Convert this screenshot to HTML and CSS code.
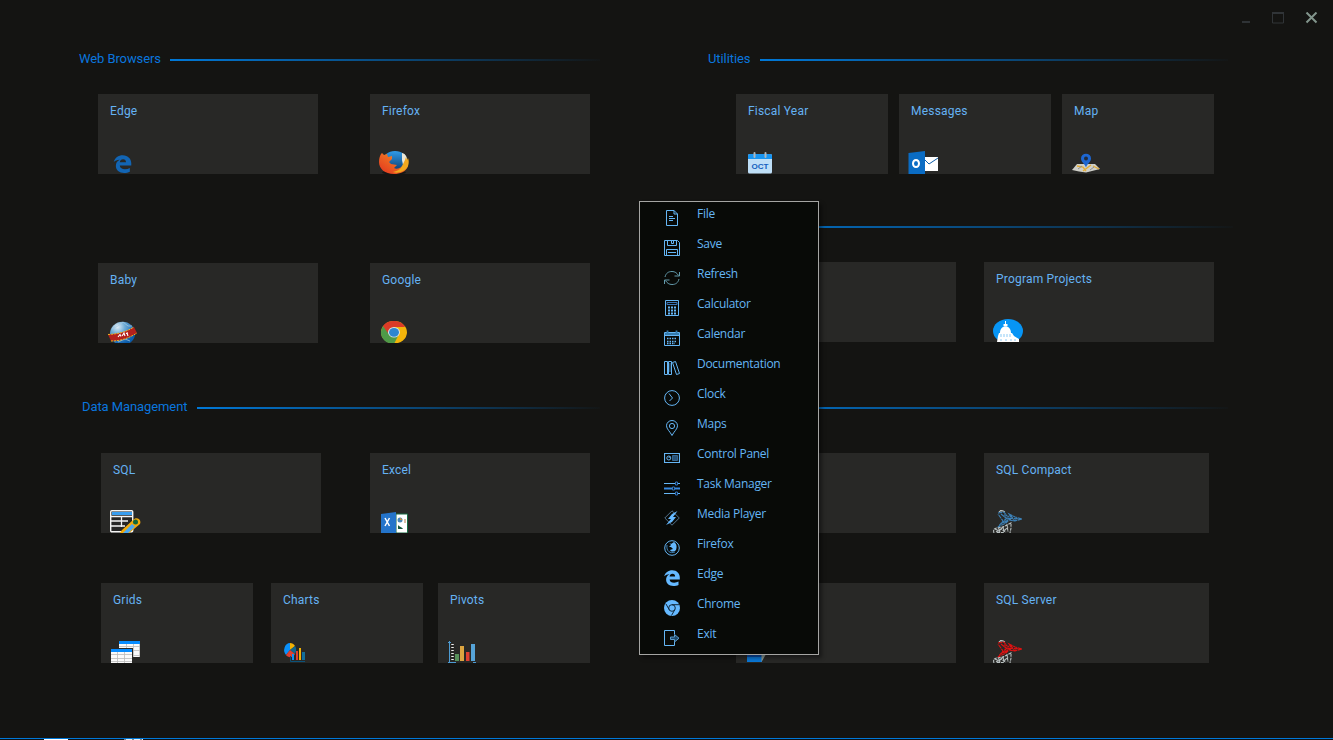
FILE: index.html
```html
<!DOCTYPE html>
<html lang="en">
<head>
<meta charset="utf-8">
<title>Launcher</title>
<link rel="stylesheet" href="styles.css">
</head>
<body>
<svg class="defs" width="0" height="0" aria-hidden="true">
  <defs>
    <linearGradient id="ffBlue" x1="0" y1="0" x2="0" y2="1"><stop offset="0" stop-color="#2f9be8"/><stop offset="1" stop-color="#0b3567"/></linearGradient>
    <linearGradient id="ffFire" x1="0" y1="1" x2="1" y2="0"><stop offset="0" stop-color="#e2321f"/><stop offset=".55" stop-color="#ee6a22"/><stop offset="1" stop-color="#f6c331"/></linearGradient>
    <radialGradient id="globe" cx=".3" cy=".22" r=".75"><stop offset="0" stop-color="#e2eef6"/><stop offset=".4" stop-color="#6caad4"/><stop offset="1" stop-color="#0a5cab"/></radialGradient>
    <symbol id="edge" viewBox="0 0 16 16"><path d="M.2 6.300C1.200 2.500 4.200 .2 8.300 .2c4.600 0 7.500 3.300 7.500 7.100v2.100H5.600c.1 2.300 2.100 3.300 4.600 3.300 1.600 0 3-.4 4.300-1.100v3.300c-1.400.8-3.200 1.100-5.100 1.100-4.400 0-7.300-2.500-7.300-6.200C2.100 7.300 3.100 5.400 5.500 4.200 3.500 4.100 1.600 4.900 .2 6.300zM5.600 6.400h5.500c0-1.700-.9-2.700-2.600-2.700S5.900 4.700 5.600 6.400z"/></symbol>
    <symbol id="bird" viewBox="0 0 32 28"><g fill="none" stroke-width="1.100"><path class="bird-light" stroke-dasharray="3 .8" d="M7 7c1-1 2-2 4-1l2 1M8 5.500l4 .5M2 28c-1-3 0-5 3-5l6-1 4-2 4-2v5l-1 5M3 24l4 2 4-4 1 4 4-4M6 22l2 5M11 21l1 6M15 19l1 8M4 27l5-3 5 3M5 27.500h7"/><path class="bird-wing" stroke-dasharray="4 .7" d="M6 8l6-1 3 4 4 1-2-3 6 3 7 2-7 2-6-1-3 3-8 4 5-6-5-7M9 9l5 4 14 1M13 9l0 9 4-5 2 2M9 19l6-6 5 3M19 10l3 6 3-3M10 18l5-2"/></g></symbol>
  </defs>
</svg>

<div class="window">
  <header class="titlebar">
    <svg class="winctl" viewBox="0 0 80 16"><path d="M2 9.500h8M2 10.500h8" stroke="#2f3336"/><path d="M32.500 .5h11v10.500h-11z" fill="none" stroke="#303437"/><path d="M32 1h12" stroke="#303437" stroke-width="2"/><path d="M66.500 .5l10 10m0-10l-10 10" stroke="#82958c" stroke-width="2"/></svg>
  </header>

  <main class="board">
    <div class="column column-left">
      <div class="heading"><h2>Web Browsers</h2><span class="rule"></span></div>
      <div class="row row-wide first">
        <article class="card w220"><h3>Edge</h3>
          <svg class="icon" viewBox="0 0 32 28"><use href="#edge" x="7" y="9" width="19" height="18" fill="#1265b4"/></svg></article>
        <article class="card w220"><h3>Firefox</h3>
          <svg class="icon" viewBox="0 0 32 28"><ellipse cx="16" cy="26.500" rx="12" ry="2" fill="#151515"/><ellipse cx="17" cy="15.500" rx="12.500" ry="10.500" fill="url(#ffBlue)"/><path d="M24 7c4 1 5 4 5 8l-4 4-1-5z" fill="#ece6d6"/><path d="M3 8l1-1 2 2 3-1 1 3 4-1 0 3-3 3 2 2 6 1-3 3c4 2 8-1 10-4l4 2c-2 6-8 8-14 8C7 28 1 23 1 16c0-4 1-6 2-8z" fill="url(#ffFire)"/><path d="M24 20l3-6 1-3 1 3 1-2c2 5 0 11-5 13-4 2-7 2-10 1 5-1 8-3 9-6z" fill="#f2a91f"/></svg></article>
      </div>
      <div class="row row-wide second">
        <article class="card w220"><h3>Baby</h3>
          <svg class="icon" viewBox="0 0 32 28"><ellipse cx="16.500" cy="18.500" rx="12.500" ry="11.800" fill="url(#globe)"/><path d="M6 14l6-3 5-4M17 7l5 4 4 0M12 27l7-3 5 2" fill="none" stroke="#a7cbe2" stroke-width=".7"/><path d="M2 19.500C12 19 20 17 28 12l3 6c-8 5-16 8-26 8z" fill="#b3201c"/><path d="M2 19.500C12 19 20 17 28 12M5 26c10 0 18-3 26-8" fill="none" stroke="#f0b01d" stroke-dasharray="2 1"/><path d="M12 22l2-2.500 1 2M16 21l2-3 1 3M20 18.500l2-.8M21 18l1 3" fill="none" stroke="#fff" stroke-width="1.100"/></svg></article>
        <article class="card w220"><h3>Google</h3>
          <svg class="icon" viewBox="0 0 32 28"><ellipse cx="16" cy="17.300" rx="13" ry="11.200" fill="#f3b40a"/><path d="M16 17.500L5 11c-3 5-3 11 2 15 3 2 6 3 9 3l4-8z" fill="#4f9a48"/><path d="M5 11c3-4 7-5 11-5 5 0 9 2 11 6H16l-6 6z" fill="#dc3b27"/><ellipse cx="16" cy="17.300" rx="6" ry="5.300" fill="#dce2e2"/><ellipse cx="16" cy="17.300" rx="5" ry="4.400" fill="#2e86d0"/></svg></article>
      </div>
      <div class="heading data"><h2>Data Management</h2><span class="rule"></span></div>
      <div class="row row-data third">
        <article class="card w220"><h3>SQL</h3>
          <svg class="icon" viewBox="0 0 32 28"><rect x="1.700" y="5.700" width="22" height="21" rx="1" fill="#252525" stroke="#f4f4f4" stroke-width="1.400"/><path d="M3 7h20v3H3z" fill="#379df0"/><path d="M2 11.500h22M2 16h17M2 21h14M12.500 11v11" stroke="#f4f4f4" stroke-width="1.300"/><path d="M10 29l3-4 11-10c3-4 9-1 7 4L19 29z" fill="#f1a90b"/><path d="M14 28l9-9 3 2.500L18 29z" fill="#4ba8f0"/><circle cx="26.500" cy="17" r="2.500" fill="#11683b"/></svg></article>
        <article class="card w220"><h3>Excel</h3>
          <svg class="icon" viewBox="0 0 32 28"><path d="M18 9h11.500v19H18z" fill="#fff" stroke="#176b42"/><path d="M3 9l15-2v21H3z" fill="#2474ca"/><path d="M7 13l4.500 8M11.500 13L7 21" stroke="#fff" stroke-width="1.500"/><circle cx="22" cy="15" r="2.500" fill="#4b88b5"/><path d="M22 15v-2.500l2.500 2.500z" fill="#c59243"/><path d="M27 14v4" stroke="#b97c4b"/><path d="M20 20c1 2 3 1 5 4h-5z" fill="#16573e"/></svg></article>
      </div>
      <div class="row row-small fourth">
        <article class="card w152"><h3>Grids</h3>
          <svg class="icon" viewBox="0 0 32 28"><path d="M10 6h21v16H10z" fill="#fafafa"/><path d="M10 6h21v3H10z" fill="#078cff"/><path d="M10 11.500h21M10 15.500h21M10 20.500h21M17.500 9v13M24.500 9v13M30.500 9v13" stroke="#bbb" stroke-width=".8"/><path d="M1 13h23v15H1z" fill="#282826"/><path d="M2 14h21v14H2z" fill="#fafafa"/><path d="M2 14h21v3H2z" fill="#078cff"/><path d="M2 19.500h21M2 23.500h21M2 26.500h21M8.500 17v11M15.500 17v11" stroke="#bbb" stroke-width=".8"/></svg></article>
        <article class="card w152 after-grids"><h3>Charts</h3>
          <svg class="icon" viewBox="0 0 32 28"><path d="M11 15V8a6 7 0 0 0-4 12z" fill="#0a91fb"/><path d="M11 15V8c2 0 4 1 5 3z" fill="#f2b104"/><path d="M11 15l5-4c2 3 1 6 0 8z" fill="#12668e"/><path d="M11 15l5 4c-2 4-7 4-9 1z" fill="#df3f31"/><path d="M13 19h2v6h-2z" fill="#0a91fb"/><path d="M17 16h2v9h-2z" fill="#df3f31"/><path d="M20 13h2v12h-2z" fill="#f2b104"/><path d="M23 17h3v8h-3z" fill="#126f9b"/><path d="M11.500 21v5.500H26" fill="none" stroke="#0b5279"/></svg></article>
        <article class="card w152 after-charts"><h3>Pivots</h3>
          <svg class="icon" viewBox="0 0 32 28"><path d="M3.500 6v22M2 7.500h3M2 27.500h8M27 27.500h3" stroke="#4d9bd2"/><path d="M6.500 9v18" stroke="#eee" stroke-width="2.500" stroke-dasharray="1 2"/><path d="M9 19h4v7H9z" fill="#57905a"/><path d="M14 11h4v15h-4z" fill="#dca540"/><path d="M20 17h3.500v9H20z" fill="#df3f31"/><path d="M25 9h4v17h-4z" fill="#56a4d8"/></svg></article>
      </div>
    </div>

    <div class="column column-right">
      <div class="heading"><h2>Utilities</h2><span class="rule"></span></div>
      <div class="row row-util first">
        <article class="card w152"><h3>Fiscal Year</h3>
          <svg class="icon" viewBox="0 0 32 28"><rect x="4" y="8" width="24" height="19.500" rx="1.500" fill="#bfdff7"/><path d="M4 13V9.500Q4 8 5.500 8h21Q28 8 28 9.500V13z" fill="#1795f2"/><path d="M10.500 7v4M21.500 7v4" stroke="#aeb7bc" stroke-width="2" stroke-linecap="round"/><text class="oct" x="16" y="23" text-anchor="middle" textLength="17" lengthAdjust="spacingAndGlyphs">OCT</text></svg></article>
        <article class="card w152"><h3>Messages</h3>
          <svg class="icon" viewBox="0 0 32 28"><path d="M17 11h14v14H17z" fill="#fff"/><path d="M17 13l5 5 9-6" fill="none" stroke="#0b5ca8"/><path d="M1.500 7l16.500-2v23H1.500z" fill="#0a6cc4"/><ellipse cx="9" cy="17.500" rx="3" ry="3.600" fill="none" stroke="#fff" stroke-width="2"/></svg></article>
        <article class="card w152"><h3>Map</h3>
          <svg class="icon" viewBox="0 0 32 28"><path d="M7 18l18 0 5 5-8 2-6 1.500-7-1-7-1.500z" fill="#cfcfc8"/><path d="M7 20l6 1 3 4M13 25l8-6M23 20l6 3" fill="none" stroke="#e3ac35" stroke-width="1.300"/><path d="M8 23l4-3M20 24l4-3" stroke="#8b8f91"/><path d="M16 21.500c-1-4-5-5-5-9a5 4.800 0 0 1 10 0C21 16.500 17 17.500 16 21.500z" fill="#1d66d1"/><circle cx="16" cy="12.500" r="2" fill="#222a38"/></svg></article>
      </div>
      <div class="heading projects"><span class="rule"></span></div>
      <div class="row row-pair projects-row">
        <article class="card w220"></article>
        <article class="card w230"><h3>Program Projects</h3>
          <svg class="icon" viewBox="0 0 32 28"><ellipse cx="16" cy="17" rx="15" ry="12" fill="#0795f5"/><path d="M13 7h1v3h-1zM11.500 10h4v2h-4zM8 19c0-9 11-9 11 0zM7 19h13l2 3 5 3v3H5l1-6z" fill="#fff"/><path d="M9 20v3M12 20v3M15 20v3M18 20v3M9 25v2M14 25v2M19 25v2M23 25v2" stroke="#8dcbf5"/></svg></article>
      </div>
      <div class="heading servers"><span class="rule"></span></div>
      <div class="row row-pair third">
        <article class="card w220"></article>
        <article class="card w225"><h3>SQL Compact</h3>
          <svg class="icon bird-blue" viewBox="0 0 32 28"><use href="#bird"/></svg></article>
      </div>
      <div class="row row-pair fourth">
        <article class="card w220">
          <svg class="icon" viewBox="0 0 32 28"><path d="M3 14h15v13H3z" fill="#0a77d5"/><path d="M3 21h15" stroke="#0b4aa3" stroke-width="2"/><path d="M17.500 27V20h4z" fill="#8c9a93"/></svg></article>
        <article class="card w225"><h3>SQL Server</h3>
          <svg class="icon bird-red" viewBox="0 0 32 28"><use href="#bird"/></svg></article>
      </div>
    </div>
  </main>

  <footer class="taskbar"><span class="task task-a"></span><span class="task task-b"></span></footer>

  <ul class="menu">
    <li><svg viewBox="0 0 16 16"><path d="M2.500 .5h7.500l3.500 3.500v11.500h-11zM10 .5V4h3.500"/><path d="M5 6.500h4M5 8.500h6M5 10.500h4"/></svg>File</li>
    <li><svg viewBox="0 0 16 16"><path d="M.5 .5h13l2 2v13H.5zM3.500 .5v5h9v-5M7.500 .5v3h2v-3M2.500 15.500v-6h11v6M4 12.500h8"/></svg>Save</li>
    <li><svg class="dim" viewBox="0 0 16 16"><path d="M1 7C2 3 4.500 1.500 8 1.500c3 0 5 1.500 6.500 4M15.500 2v4h-5M15 9c-1 4-3.500 5.500-7 5.500-3 0-5-1.500-6.500-4M.5 14v-4h5"/></svg>Refresh</li>
    <li><svg viewBox="0 0 16 16"><path d="M1.500 .5h13v15h-13z"/><path d="M3 2.500h10v2H3z" stroke="#3976b8"/><path d="M4 7.500h8M4 10.500h8M4 13.500h8" stroke-width="2" stroke-dasharray="2 1"/></svg>Calculator</li>
    <li><svg viewBox="0 0 16 16"><path d="M.5 2.500h15v13H.5zM.5 5.500h15"/><path d="M3.500 .5v3M12.500 .5v3M1 4h14" stroke="#347bad" stroke-width="1.800"/><path d="M3 8.500h10M3 11.500h10M3 13.500h8" stroke-width="1.500" stroke-dasharray="1.500 1"/></svg>Calendar</li>
    <li><svg viewBox="0 0 16 16"><path d="M.5 1.500h3v13h-3zM4.500 1.500h3v13h-3zM8.500 2.500l3-1 4 12-3 1z"/><path d="M6 3v9" stroke="#3c719b"/></svg>Documentation</li>
    <li><svg viewBox="0 0 16 16"><circle cx="8" cy="8" r="7.400"/><path d="M5 3.500L8.500 8 5.500 11"/></svg>Clock</li>
    <li><svg viewBox="0 0 16 16"><path d="M8 15.500C6 11.500 2.500 9 2.500 5.800a5.500 5.300 0 0 1 11 0C13.500 9 10 11.500 8 15.500z"/><circle cx="8" cy="6" r="2.600"/></svg>Maps</li>
    <li><svg viewBox="0 0 16 16"><path d="M.5 3.500h15v9H.5z" stroke-width="1.200"/><circle cx="4.800" cy="8" r="2"/><path d="M4.800 8l1-1.500"/><path d="M8.500 5.500h5v5h-5z" fill="#36678f" stroke="#36678f"/><path d="M10 6v4M12 6v4" stroke="#183e61"/></svg>Control Panel</li>
    <li><svg viewBox="0 0 16 16"><path d="M0 3.500h16M0 13.500h16"/><path d="M0 8.500h16" stroke="#3788df" stroke-width="2"/><path d="M11.500 2h2v3h-2zM8.500 7h2v3h-2zM11.500 12h2v3h-2z" fill="#080a07" stroke="#2f72bc"/></svg>Task Manager</li>
    <li><svg viewBox="0 0 16 16"><path d="M8 .8L15.300 8 8 15.200.8 8z" stroke="#52718b"/><path d="M13.500 1L8 4 4 9h3l-5 6 6-3 4-5H9z" fill="#65b9ff" stroke="none"/></svg>Media Player</li>
    <li><svg viewBox="0 0 16 16"><circle cx="8" cy="8" r="7.300"/><path d="M5 2.500l2 1.500 3-2c3 2 3 5 2 8-2 2-5 2-6 0l3-1-2-2H5l2-2z" fill="#65b9ff" stroke="none"/><path d="M3 5c-1 6 3 9 8 7" stroke="#3c7fb4"/></svg>Firefox</li>
    <li><svg viewBox="0 0 16 16"><use href="#edge" width="16" height="16" fill="#65b9ff" stroke="none"/></svg>Edge</li>
    <li><svg viewBox="0 0 16 16"><circle cx="8" cy="8" r="8" fill="#65b9ff" stroke="none"/><g stroke="#10283a"><circle cx="8" cy="8" r="3.300"/><path d="M8 4.700h7M5.200 9.700L2 4M10.800 9.700L7.500 15.500"/></g></svg>Chrome</li>
    <li><svg viewBox="0 0 16 16"><path d="M10.500 4V.5H.5v15h10V12"/><path d="M6.500 7h4V4.500L15 8.200 10.500 12V9.500h-4z" stroke="#5a9aca" fill="#1f4a6c"/></svg>Exit</li>
  </ul>
</div>
</body>
</html>
```
FILE: styles.css
```css
* { box-sizing: border-box; }

body {
  margin: 0;
  background: #141412;
  font-family: Roboto, "Liberation Sans", sans-serif;
}

.defs { position: absolute; }

.window {
  position: relative;
  display: flex;
  flex-direction: column;
  height: 740px;
  overflow: hidden;
}

.titlebar {
  display: flex;
  justify-content: flex-end;
  height: 49px;
  padding: 12px 13px 0 0;
}

.winctl { width: 80px; height: 16px; }

.board { display: flex; flex: 1; }

.column-left { width: 640px; padding-left: 79px; }
.column-right { width: 693px; padding-left: 68px; }

.heading {
  display: flex;
  align-items: center;
  gap: 9.500px;
  height: 22px;
}

.heading h2 {
  margin: 0;
  padding-bottom: 2px;
  font-size: 13px;
  line-height: 18px;
  font-weight: 400;
  letter-spacing: -0.09px;
  color: #0a76de;
  white-space: nowrap;
}

.rule {
  flex: 1;
  height: 2px;
  background: linear-gradient(90deg, #0078d7, rgba(0, 120, 215, 0.5) 55%, rgba(0, 120, 215, 0.02));
}

.column-left .heading { margin-right: 40px; }
.column-right .heading { margin-right: 105px; }
.column-left .data { margin: 54px 40px 0 3px; }
.column-right .projects { margin: 42px 100px 0 0; }
.column-right .servers { margin-top: 55px; }

.row { display: flex; height: 80px; }
.first { margin-top: 23px; }
.second { margin-top: 89px; }
.projects-row { margin-top: 24px; }
.third { margin-top: 34px; }
.fourth { margin-top: 50px; }

.row-wide { padding-left: 19px; gap: 52px; }
.row-data { padding-left: 22px; gap: 49px; }
.row-small { padding-left: 22px; }
.row-util { padding-left: 28px; gap: 11px; }
.row-pair { padding-left: 28px; gap: 28px; }
.after-grids { margin-left: 18px; }
.after-charts { margin-left: 15px; }

.card {
  display: flex;
  flex-direction: column;
  overflow: hidden;
  background: #282826;
}

.w152 { width: 152px; }
.w220 { width: 220px; }
.w225 { width: 225px; }
.w230 { width: 230px; }

.card h3 {
  margin: 8px 0 0 12px;
  font-size: 12px;
  line-height: 18px;
  font-weight: 400;
  letter-spacing: 0.2px;
  color: #65b2f3;
}

.icon {
  width: 32px;
  height: 28px;
  margin: auto 0 0 8px;
}

.oct {
  font: 700 7px "Liberation Sans", sans-serif;
  fill: #155fc0;
}

.bird-light { stroke: #b9c0c0; }
.bird-blue { stroke: #3c80b6; }
.bird-red { stroke: #df1111; }

.taskbar {
  display: flex;
  height: 2px;
  padding-left: 44px;
  gap: 56px;
  border-top: 1px solid #0078d7;
  background: #0c1218;
}

.task { height: 1px; }
.task-a { width: 24px; background: #fff; }
.task-b { width: 19px; background: repeating-linear-gradient(90deg, #7d8b93 0 2px, #e4f0f5 2px 8px); }

/* Context menu over the board */
.menu {
  position: absolute;
  left: 639px;
  top: 201px;
  width: 180px;
  height: 454px;
  margin: 0;
  padding: 0;
  list-style: none;
  border: 1px solid #a5a5a3;
  background: #080a07;
  box-shadow: 3px 3px 4px rgba(0, 0, 0, 0.4);
}

.menu li {
  display: flex;
  align-items: flex-start;
  gap: 17px;
  height: 30px;
  padding: 3px 0 0 24px;
  font: 12px/18px "Open Sans", "Noto Sans", sans-serif;
  letter-spacing: -0.28px;
  color: #65b6f5;
}

.menu svg {
  width: 16px;
  height: 16px;
  margin-top: 5px;
  fill: none;
  stroke: #65b6f5;
}

.menu .dim { stroke: #639aab; }
```
